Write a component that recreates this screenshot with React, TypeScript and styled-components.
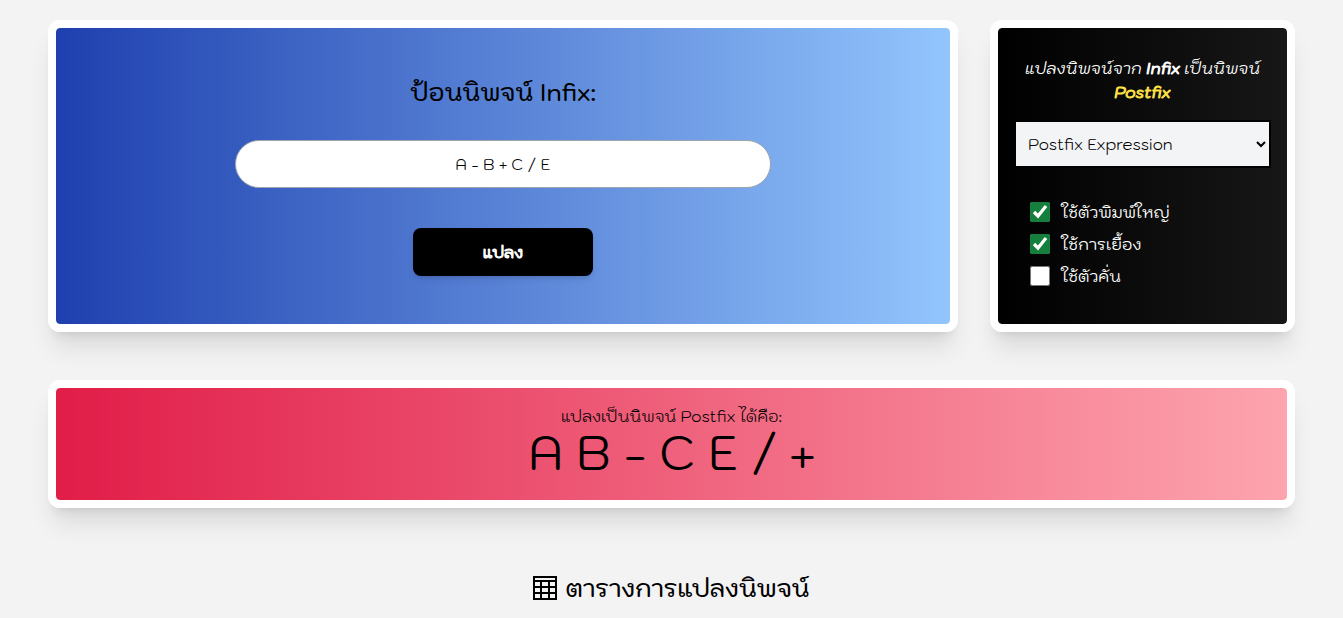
import React, { useState } from "react";
import styled, { createGlobalStyle } from "styled-components";

const GlobalStyle = createGlobalStyle`
  *, *::before, *::after { box-sizing: border-box; }
  body {
    margin: 0;
    background: #f3f3f3;
    color: #000;
    font-family: "Kodchasan", "Inter", "Noto Sans", sans-serif;
    font-size: 16px;
    line-height: 24px;
  }
  input, select, button { font: inherit; margin: 0; }
  strong { font-weight: 400; -webkit-text-stroke: 1px currentColor; }
`;

const Page = styled.main`
  padding: 20px 48px;
  display: flex;
  flex-direction: column;
  gap: 48px;
`;

const TopRow = styled.div`
  display: grid;
  grid-template-columns: minmax(0, 3fr) minmax(305px, 1fr);
  gap: 32px;
`;

const Card = styled.section<{ $from: string; $to: string }>`
  border: 8px solid #fff;
  border-radius: 12px;
  background: linear-gradient(to right, ${(p) => p.$from}, ${(p) => p.$to}) padding-box;
  box-shadow: 0 20px 25px -5px rgba(0, 0, 0, 0.1), 0 8px 10px -6px rgba(0, 0, 0, 0.1);
`;

const InfixForm = styled.form`
  padding: 48px 0;
  display: flex;
  flex-direction: column;
  align-items: center;
`;

const InfixLabel = styled.label`
  font-size: 24px;
  line-height: 32px;
  font-weight: 500;
`;

const InfixInput = styled.input`
  width: 60%;
  height: 48px;
  margin: 32px 0 40px;
  border: 1px solid #9ca3af;
  border-radius: 24px;
  background: #fff;
  color: #000;
  font-weight: 300;
  text-align: center;
`;

const ConvertButton = styled.button`
  width: 180px;
  height: 48px;
  border: 0;
  border-radius: 8px;
  background: #000;
  color: #fff;
  font-weight: 400;
  -webkit-text-stroke: 1px currentColor;
  box-shadow: 0 4px 6px -1px rgba(0, 0, 0, 0.1), 0 2px 4px -2px rgba(0, 0, 0, 0.1);
`;

const Options = styled.div`
  padding: 28px 16px;
  color: #fff;
`;

const Summary = styled.p`
  margin: 0 0 16px;
  text-align: center;
  font-style: italic;
`;

const Target = styled.strong`
  display: block;
  color: #fde047;
`;

const TypeSelect = styled.select`
  width: 100%;
  height: 48px;
  padding: 0 8px;
  border: 2px solid #000;
  border-radius: 0;
  background: #f3f4f6;
  color: #000;
  font-weight: 300;
`;

const CheckList = styled.div`
  padding: 32px 16px 0;
  display: flex;
  flex-direction: column;
  gap: 8px;
`;

const CheckRow = styled.label`
  display: flex;
  align-items: center;
  gap: 12px;
`;

const Check = styled.input`
  width: 20px;
  height: 20px;
  accent-color: #15803d;
`;

const Result = styled.div`
  padding: 16px 16px 24px;
  text-align: center;
`;

const ResultLabel = styled.p`
  margin: 0;
  font-weight: 300;
`;

const Expression = styled.output`
  display: block;
  font-size: 48px;
  line-height: 48px;
`;

const TableTitle = styled.h2`
  margin: 16px 0 0;
  display: flex;
  align-items: center;
  justify-content: center;
  gap: 8px;
  font-size: 24px;
  line-height: 32px;
  font-weight: 500;
`;

const TableIcon = () => (
  <svg width="24" height="24" viewBox="0 0 24 24" fill="none" stroke="#000" strokeWidth="2" aria-hidden="true">
    <path d="M1 1h22v22H1zM1 5h22M1 11h22M1 17h22M8 5v18M16 5v18" />
  </svg>
);

export default function App() {
  const [infix, setInfix] = useState("A - B + C / E");
  const [options, setOptions] = useState([
    { label: "ใช้ตัวพิมพ์ใหญ่", on: true },
    { label: "ใช้การเยื้อง", on: true },
    { label: "ใช้ตัวคั่น", on: false },
  ]);
  const toggle = (index: number) =>
    setOptions(options.map((o, i) => (i === index ? { ...o, on: !o.on } : o)));

  return (
    <>
      <GlobalStyle />
      <Page>
        <TopRow>
          <Card $from="#1e40af" $to="#93c5fd">
            <InfixForm onSubmit={(e) => e.preventDefault()}>
              <InfixLabel htmlFor="infix">ป้อนนิพจน์ Infix:</InfixLabel>
              <InfixInput id="infix" value={infix} onChange={(e) => setInfix(e.target.value)} />
              <ConvertButton type="submit">แปลง</ConvertButton>
            </InfixForm>
          </Card>
          <Card $from="#000" $to="#171717">
            <Options>
              <Summary>
                แปลงนิพจน์จาก <strong>Infix</strong> เป็นนิพจน์ <Target>Postfix</Target>
              </Summary>
              <TypeSelect aria-label="Postfix Expression">
                <option>Postfix Expression</option>
                <option>Prefix Expression</option>
              </TypeSelect>
              <CheckList>
                {options.map((o, i) => (
                  <CheckRow key={o.label}>
                    <Check type="checkbox" checked={o.on} onChange={() => toggle(i)} />
                    {o.label}
                  </CheckRow>
                ))}
              </CheckList>
            </Options>
          </Card>
        </TopRow>
        <Card $from="#e11d48" $to="#fda4af">
          <Result>
            <ResultLabel>แปลงเป็นนิพจน์ Postfix ได้คือ:</ResultLabel>
            <Expression>A B - C E / +</Expression>
          </Result>
        </Card>
        <TableTitle>
          <TableIcon />
          ตารางการแปลงนิพจน์
        </TableTitle>
      </Page>
    </>
  );
}
